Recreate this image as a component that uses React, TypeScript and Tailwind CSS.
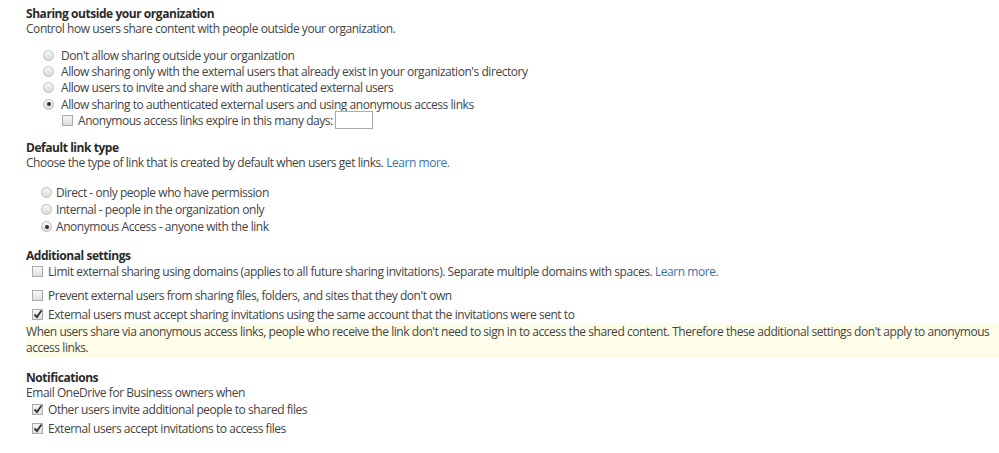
const Radio = ({ checked }: { checked?: boolean }) => (
  <span className="relative inline-block w-[11px] h-[11px] rounded-full border border-[#bdbdbd] bg-gradient-to-b from-[#f6f6f6] to-[#dcdcdc] shrink-0">
    {checked && <span className="absolute left-[2.5px] top-[2.5px] w-[4px] h-[4px] rounded-full bg-[#333]" />}
  </span>
);

const Check = ({ checked }: { checked?: boolean }) => (
  <span className="relative inline-block w-[11px] h-[11px] border border-[#ababab] bg-gradient-to-b from-[#f7f7f7] to-[#dedede] shrink-0">
    {checked && (
      <svg className="absolute -left-[1px] -top-[2px]" width="12" height="12" viewBox="0 0 12 12">
        <path d="M2.5 6.5 L5 9 L9.5 2.5" fill="none" stroke="#333" strokeWidth="1.8" />
      </svg>
    )}
  </span>
);

const Link = ({ children }: { children: React.ReactNode }) => (
  <a href="#" className="text-[#3a72a8]">{children}</a>
);

export default function App() {
  return (
    <div
      className="w-[999px] h-[453px] bg-white text-[#444] text-[12px] leading-[15px] pt-[6px] pl-[26px] overflow-hidden"
      style={{ fontFamily: '"Open Sans", "Noto Sans", sans-serif', letterSpacing: '-0.45px' }}
    >
      {/* Sharing outside */}
      <div className="font-bold text-[#2a2a2a]">Sharing outside your organization</div>
      <div>Control how users share content with people outside your organization.</div>
      <div className="mt-[11px] pl-[17px]">
        {[
          "Don't allow sharing outside your organization",
          "Allow sharing only with the external users that already exist in your organization's directory",
          'Allow users to invite and share with authenticated external users',
        ].map((t) => (
          <div key={t} className="flex items-center gap-[7px] h-[16.3px]">
            <Radio />
            <span>{t}</span>
          </div>
        ))}
        <div className="flex items-center gap-[7px] h-[16.3px]">
          <Radio checked />
          <span>Allow sharing to authenticated external users and using anonymous access links</span>
        </div>
        <div className="flex items-center gap-[5px] h-[16.3px] pl-[19px]">
          <Check />
          <span>Anonymous access links expire in this many days:</span>
          <span className="inline-block w-[38px] h-[18px] border border-[#ababab] bg-white -ml-[3px]" />
        </div>
      </div>

      {/* Default link type */}
      <div className="mt-[12px] font-bold text-[#2a2a2a]">Default link type</div>
      <div>
        Choose the type of link that is created by default when users get links. <Link>Learn more.</Link>
      </div>
      <div className="mt-[14px] pl-[15px]">
        <div className="flex items-center gap-[4px] h-[17px]">
          <Radio />
          <span>Direct - only people who have permission</span>
        </div>
        <div className="flex items-center gap-[4px] h-[17px]">
          <Radio />
          <span>Internal - people in the organization only</span>
        </div>
        <div className="flex items-center gap-[4px] h-[17px]">
          <Radio checked />
          <span>Anonymous Access - anyone with the link</span>
        </div>
      </div>

      {/* Additional settings */}
      <div className="mt-[13px] font-bold text-[#2a2a2a]">Additional settings</div>
      <div className="pl-[6px]">
        <div className="flex items-center gap-[5px] h-[17px]">
          <Check />
          <span>
            Limit external sharing using domains (applies to all future sharing invitations). Separate multiple domains with spaces.{' '}
            <Link>Learn more.</Link>
          </span>
        </div>
        <div className="flex items-center gap-[5px] h-[17px] mt-[7px]">
          <Check />
          <span>Prevent external users from sharing files, folders, and sites that they don't own</span>
        </div>
        <div className="flex items-center gap-[5px] h-[17px] mt-[2px]">
          <Check checked />
          <span>External users must accept sharing invitations using the same account that the invitations were sent to</span>
        </div>
      </div>
      <div className="bg-[#fdfde9] pt-[1px] pb-[2px] pr-[4px] leading-[16px]">
        When users share via anonymous access links, people who receive the link don't need to sign in to access the shared content. Therefore these additional settings don't apply to anonymous access links.
      </div>

      {/* Notifications */}
      <div className="mt-[12px] font-bold text-[#2a2a2a]">Notifications</div>
      <div>Email OneDrive for Business owners when</div>
      <div className="pl-[6px]">
        <div className="flex items-center gap-[5px] h-[18px]">
          <Check checked />
          <span>Other users invite additional people to shared files</span>
        </div>
        <div className="flex items-center gap-[5px] h-[18px] mt-[1px]">
          <Check checked />
          <span>External users accept invitations to access files</span>
        </div>
      </div>
    </div>
  );
}
